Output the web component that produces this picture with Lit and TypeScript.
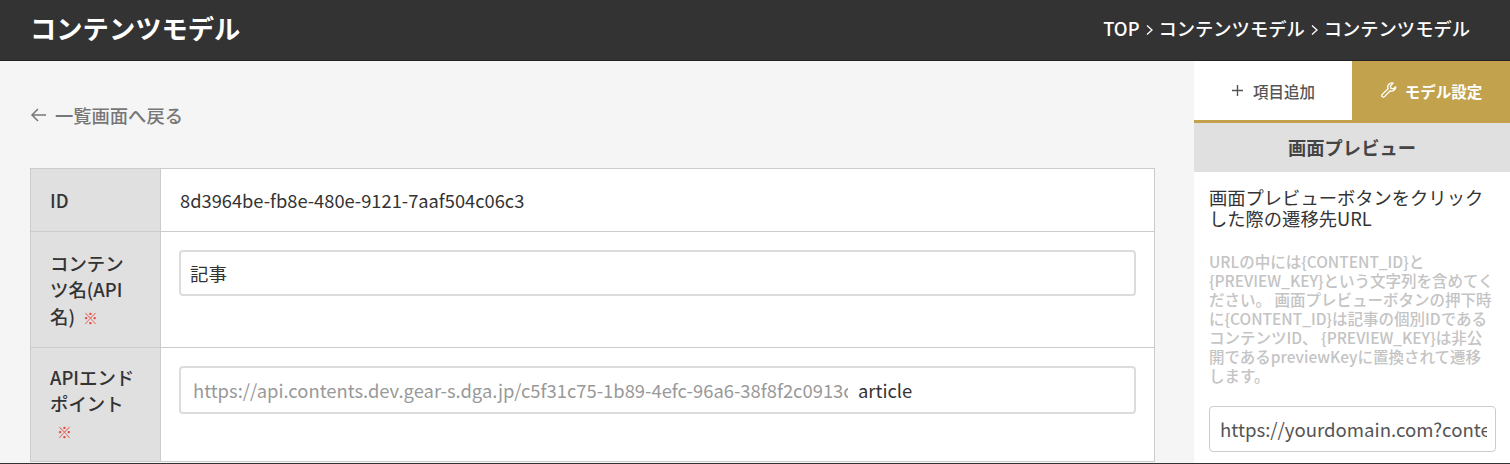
import { LitElement, html, css } from 'lit';
import { customElement } from 'lit/decorators.js';

const crumbs = ['TOP', 'コンテンツモデル', 'コンテンツモデル'];

@customElement('app-root')
export class AppRoot extends LitElement {
  static styles = css`
    :host {
      display: block;
      height: 464px;
      overflow: hidden;
      font-family: 'Noto Sans CJK JP', 'Noto Sans', sans-serif;
      color: #333;
      background: #f5f5f5;
    }
    .top {
      display: flex;
      align-items: center;
      justify-content: space-between;
      box-sizing: border-box;
      height: 61px;
      padding: 0 40px 4px 30px;
      background: #333;
      color: #fff;
      border-bottom: 1px solid #222;
    }
    h1 {
      margin: 0;
      font-size: 26.3px;
      font-weight: 700;
      line-height: 1;
    }
    .crumbs {
      display: flex;
      align-items: center;
      gap: 5px;
      font-size: 18.3px;
      font-weight: 500;
    }
    .crumbs svg {
      display: block;
      margin-top: 3px;
    }
    .body {
      display: flex;
      box-sizing: border-box;
      height: 403px;
      border-bottom: 1px solid #333;
    }
    .main {
      flex: 1;
      padding: 42px 39px 0 30px;
      min-width: 0;
      overflow: hidden;
    }
    .back {
      display: flex;
      align-items: center;
      gap: 8px;
      height: 24px;
      font-size: 18.3px;
      font-weight: 500;
      color: #777;
    }
    table {
      width: 100%;
      margin-top: 41px;
      border-collapse: collapse;
      table-layout: fixed;
      background: #fff;
    }
    th,
    td {
      border: 1px solid #ccc;
      vertical-align: top;
      font-size: 18.4px;
    }
    th {
      width: 130px;
      box-sizing: border-box;
      padding: 18px 19px 10px;
      background: #e0e0e0;
      text-align: left;
      font-weight: 500;
      line-height: 26.4px;
      word-break: break-all;
      word-spacing: -3px;
    }
    td {
      padding: 18px 19px;
    }
    .req {
      margin-left: 7px;
      color: #e04a3f;
      font-size: 15px;
      font-weight: 700;
      line-height: 1;
    }
    .id-row th,
    .id-row td {
      height: 63px;
      box-sizing: border-box;
      line-height: 26px;
    }
    .id-row td {
      font-size: 18.3px;
    }
    .name-row th {
      height: 116px;
      box-sizing: border-box;
    }
    .end-row th {
      height: 114px;
      box-sizing: border-box;
      padding-top: 16px;
    }
    .field {
      display: flex;
      align-items: center;
      box-sizing: border-box;
      width: calc(100% + 2px);
      height: 46px;
      margin: 0 -1px;
      padding: 0 14px 0 9px;
      border: 2px solid #dcdcdc;
      border-radius: 4px;
      background: #fff;
      white-space: nowrap;
    }
    .end-row .field {
      height: 48px;
      padding-left: 12px;
    }
    .host {
      flex: none;
      width: 655px;
      overflow: hidden;
      color: #999;
    }
    .path {
      margin-left: 10px;
    }
    .side {
      flex: none;
      width: 316px;
      background: #fff;
    }
    .tabs {
      display: flex;
      height: 59px;
      border-bottom: 3px solid #c2a24c;
      font-size: 15.5px;
      font-weight: 500;
    }
    .tab {
      display: flex;
      align-items: center;
      justify-content: center;
      gap: 9px;
      flex: 1;
      color: #555;
    }
    .tab.on {
      flex: none;
      width: 158px;
      gap: 7px;
      background: #c2a24c;
      color: #fff;
      font-weight: 700;
    }
    .panel-title {
      height: 49px;
      line-height: 49px;
      background: #e0e0e0;
      text-align: center;
      font-size: 18.3px;
      font-weight: 700;
      color: #444;
    }
    .panel {
      padding: 15px 14px 0 15px;
    }
    .lead {
      margin: 0;
      font-size: 18.3px;
      line-height: 21px;
      color: #333;
    }
    .note {
      margin: 23px 0 0;
      font-size: 15.5px;
      line-height: 19px;
      font-weight: 500;
      color: #c4c4c4;
    }
    .url {
      box-sizing: border-box;
      height: 46px;
      margin-top: 21px;
      border: 1px solid #ccc;
      border-radius: 4px;
      padding: 0 8px 0 10px;
      font-size: 18.6px;
      line-height: 44px;
      color: #555;
    }
    .url span {
      display: block;
      overflow: hidden;
      white-space: nowrap;
    }
  `;

  render() {
    return html`
      <header class="top">
        <h1>コンテンツモデル</h1>
        <nav class="crumbs">
          ${crumbs.map(
            (c, i) => html`${i > 0
                ? html`<svg width="9" height="12" viewBox="0 0 9 12" fill="none" stroke="#fff" stroke-width="1.3"><path d="M2 1.5 7 6l-5 4.5" /></svg>`
                : ''}<span>${c}</span>`
          )}
        </nav>
      </header>
      <div class="body">
        <section class="main">
          <div class="back">
            <svg width="17" height="14" viewBox="0 0 17 14" fill="none" stroke="#777" stroke-width="1.5"><path d="M16 7H2M8 1 2 7l6 6" /></svg>
            <span>一覧画面へ戻る</span>
          </div>
          <table>
            <tr class="id-row">
              <th>ID</th>
              <td>8d3964be-fb8e-480e-9121-7aaf504c06c3</td>
            </tr>
            <tr class="name-row">
              <th>コンテンツ名(API名) <span class="req">※</span></th>
              <td><div class="field">記事</div></td>
            </tr>
            <tr class="end-row">
              <th>APIエンドポイント <span class="req">※</span></th>
              <td>
                <div class="field">
                  <span class="host">https://api.contents.dev.gear-s.dga.jp/c5f31c75-1b89-4efc-96a6-38f8f2c0913c</span>
                  <span class="path">article</span>
                </div>
              </td>
            </tr>
          </table>
        </section>
        <aside class="side">
          <div class="tabs">
            <div class="tab">
              <svg width="13" height="13" viewBox="0 0 13 13" stroke="#555" stroke-width="1.4"><path d="M6.5 1v11M1 6.5h11" /></svg>
              <span>項目追加</span>
            </div>
            <div class="tab on">
              <svg width="18" height="18" viewBox="0 0 24 24" fill="none" stroke="#fff" stroke-width="1.8" stroke-linejoin="round"><path d="M21 6.5a5.5 5.5 0 0 1-7.4 5.2L6 19.5a2.1 2.1 0 0 1-3-3l7.8-7.6A5.5 5.5 0 0 1 17.5 1.5L14 5l.5 3.5L18 9l3-2.5z" /></svg>
              <span>モデル設定</span>
            </div>
          </div>
          <div class="panel-title">画面プレビュー</div>
          <div class="panel">
            <p class="lead">画面プレビューボタンをクリックした際の遷移先URL</p>
            <p class="note">URLの中には{CONTENT_ID}と{PREVIEW_KEY}という文字列を含めてください。 画面プレビューボタンの押下時に{CONTENT_ID}は記事の個別IDであるコンテンツID、 {PREVIEW_KEY}は非公開であるpreviewKeyに置換されて遷移します。</p>
            <div class="url"><span>https://yourdomain.com?contentId={CONTENT_ID}</span></div>
          </div>
        </aside>
      </div>
    `;
  }
}
